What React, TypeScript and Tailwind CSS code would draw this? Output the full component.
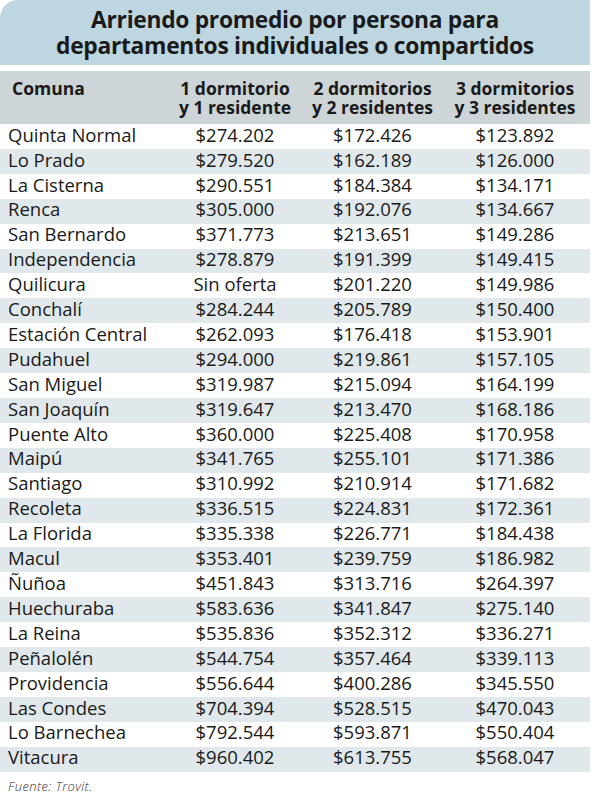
const rows: [string, string, string, string][] = [
  ['Quinta Normal', '$274.202', '$172.426', '$123.892'],
  ['Lo Prado', '$279.520', '$162.189', '$126.000'],
  ['La Cisterna', '$290.551', '$184.384', '$134.171'],
  ['Renca', '$305.000', '$192.076', '$134.667'],
  ['San Bernardo', '$371.773', '$213.651', '$149.286'],
  ['Independencia', '$278.879', '$191.399', '$149.415'],
  ['Quilicura', 'Sin oferta', '$201.220', '$149.986'],
  ['Conchalí', '$284.244', '$205.789', '$150.400'],
  ['Estación Central', '$262.093', '$176.418', '$153.901'],
  ['Pudahuel', '$294.000', '$219.861', '$157.105'],
  ['San Miguel', '$319.987', '$215.094', '$164.199'],
  ['San Joaquín', '$319.647', '$213.470', '$168.186'],
  ['Puente Alto', '$360.000', '$225.408', '$170.958'],
  ['Maipú', '$341.765', '$255.101', '$171.386'],
  ['Santiago', '$310.992', '$210.914', '$171.682'],
  ['Recoleta', '$336.515', '$224.831', '$172.361'],
  ['La Florida', '$335.338', '$226.771', '$184.438'],
  ['Macul', '$353.401', '$239.759', '$186.982'],
  ['Ñuñoa', '$451.843', '$313.716', '$264.397'],
  ['Huechuraba', '$583.636', '$341.847', '$275.140'],
  ['La Reina', '$535.836', '$352.312', '$336.271'],
  ['Peñalolén', '$544.754', '$357.464', '$339.113'],
  ['Providencia', '$556.644', '$400.286', '$345.550'],
  ['Las Condes', '$704.394', '$528.515', '$470.043'],
  ['Lo Barnechea', '$792.544', '$593.871', '$550.404'],
  ['Vitacura', '$960.402', '$613.755', '$568.047'],
]

const cols = 'grid grid-cols-[165px_140px_135px_150px]'

export default function App() {
  return (
    <div className="w-[590px] bg-white font-['Open_Sans',sans-serif] text-[#1a1a1a]">
      {/* Title band */}
      <div className="flex h-[65px] flex-col items-center justify-center rounded-tl-[18px] bg-[#bdd6e0] text-[22.8px] font-bold leading-[26px] tracking-[-0.3px]">
        <div>Arriendo promedio por persona para</div>
        <div>departamentos individuales o compartidos</div>
      </div>

      {/* Column headers */}
      <div className={`${cols} mt-[6px] h-[53px] bg-[#cdd5d8] pt-[8px] text-[17.5px] font-bold leading-[19px]`}>
        <div className="pl-[12px]">Comuna</div>
        <div className="text-center">1 dormitorio<br />y 1 residente</div>
        <div className="text-center">2 dormitorios<br />y 2 residentes</div>
        <div className="text-center">3 dormitorios<br />y 3 residentes</div>
      </div>

      {/* Rows */}
      {rows.map((r, i) => (
        <div
          key={r[0]}
          className={`${cols} h-[24.92px] items-center pb-[3px] text-[18.5px] leading-none ${i % 2 === 1 ? 'bg-[#e0e8eb]' : 'bg-white'}`}
        >
          <div className="pl-[8px]">{r[0]}</div>
          <div className="text-center">{r[1]}</div>
          <div className="text-center">{r[2]}</div>
          <div className="text-center">{r[3]}</div>
        </div>
      ))}

      <div className="pl-[8px] pt-[5px] text-[13px] font-light italic tracking-[0.4px] text-[#333]">Fuente: Trovit.</div>
    </div>
  )
}
